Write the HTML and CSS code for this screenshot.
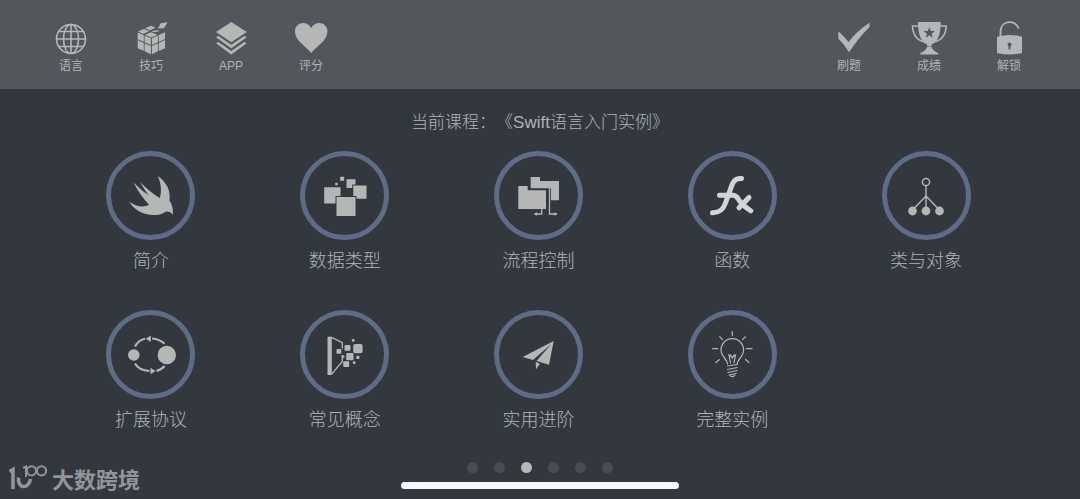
FILE: index.html
```html
<!DOCTYPE html>

<html lang="zh-CN">

<head>
	<title>Swift语言入门实例</title>
	<meta charset="utf-8" />
	<meta name="viewport" content="width=device-width,initial-scale=1" />
	<link rel="stylesheet" href="styles.css">
</head>

<body>
	<header class="toolbar">
		<nav class="toolbar-group">
			<button class="tool">
				<svg viewBox="0 0 36 36" fill="none" stroke="currentColor" stroke-width="1.6">
					<circle cx="18" cy="18" r="14.5" />
					<ellipse cx="18" cy="18" rx="7.5" ry="14.5" />
					<path d="M18 3.500V32.500M3.500 18H32.500M6 10.500H30M6 25.500H30" />
				</svg>
				<span>语言</span>
			</button>
			<button class="tool">
				<svg viewBox="0 0 36 36" fill="currentColor">
					<path d="M24.700 7.500L27.800 2.300L34.700 1.200L30.800 7.200Z" />
					<path d="M12 7.300L18 4.700L22.500 6.500L17.300 9.500ZM5 10.500L11 8L16.300 10L10.300 13ZM12 13.800L18 11.300L24.500 13.700L18.300 16.600ZM18.500 10.300L24.500 9L26.500 10.200L20.500 11.300Z" />
					<path d="M4.700 11.500L10.800 14.200V20.800L4.700 18.200ZM11.600 14.500L17.900 17.300V24L11.600 21.200ZM4.700 19.200L10.800 21.900V29.800L4.700 27.200ZM11.600 22.200L17.900 25V33.300L11.600 30.300Z" />
					<path d="M18.900 17.300L24.900 14.500V21.200L18.900 24ZM25.700 14L32 11.200V18L25.700 20.900ZM18.900 25L24.900 22.200V30.300L18.900 33.300ZM25.700 21.900L32 19V27.200L25.700 30Z" />
				</svg>
				<span>技巧</span>
			</button>
			<button class="tool">
				<svg viewBox="0 0 36 36" fill="currentColor">
					<path d="M18.300 1L33.800 11L18.300 21.300L3 11Z" />
					<path d="M3 16.200L5.300 15L18.300 23.800L31.300 15L33.800 16.200L18.300 27.200Z" />
					<path d="M3 22.300L5.300 21L18.300 29.900L31.300 21L33.800 22.300L18.300 33.400Z" />
				</svg>
				<span>APP</span>
			</button>
			<button class="tool">
				<svg viewBox="0 0 36 36" fill="currentColor">
					<path d="M18.200 32C14 26 2 20 2 10.500C2 1 14 -1 18.200 7C22.500 -1 34.400 1 34.400 10.500C34.400 20 22.500 26 18.200 32Z" />
				</svg>
				<span>评分</span>
			</button>
		</nav>
		<nav class="toolbar-group">
			<button class="tool">
				<svg viewBox="0 0 36 36" fill="currentColor">
					<path d="M7.300 10.200Q12.500 14.500 17.500 21Q26 10 38.500 1.800V6Q27.500 17 18 31.200Q13.500 23.500 7.300 17.500Z" />
				</svg>
				<span>刷题</span>
			</button>
			<button class="tool">
				<svg viewBox="0 0 36 36" fill="currentColor">
					<path d="M7 1H29.700Q29.700 20 20.500 23.500V25.500H16.200V23.500Q7 20 7 1Z" />
					<path d="M7.500 5H1.500Q2 18.500 14 21M29.200 5H35.200Q34.700 18.500 22.700 21" fill="none" stroke="currentColor" stroke-width="1.600" />
					<path d="M16 26H20.700Q22 30 27.300 32V33.400H9.300V32Q14.700 30 16 26Z" />
					<path class="cutout" d="M18.300 6L19.700 10L23.900 10.100L20.600 12.700L21.800 16.700L18.300 14.300L14.800 16.700L16 12.700L12.700 10.100L16.900 10Z" />
				</svg>
				<span>成绩</span>
			</button>
			<button class="tool">
				<svg viewBox="0 0 36 36" fill="currentColor">
					<path d="M9.500 15.500V11C9.500 -1.500 25 -1.500 27.600 7.500" fill="none" stroke="currentColor" stroke-width="1.800" />
					<path d="M6 15.700Q18.500 12.500 31 15.700V32Q18.500 35 6 32Z" />
					<path class="cutout" d="M18.500 21.500A2 2 0 0 1 19.500 25.200L19.300 28.500H17.700L17.500 25.200A2 2 0 0 1 18.500 21.500Z" />
				</svg>
				<span>解锁</span>
			</button>
		</nav>
	</header>

	<main>
		<h1>当前课程：《Swift语言入门实例》</h1>

		<div class="chapters">
			<a class="chapter" href="#">
				<span class="ring">
					<svg viewBox="0 0 48 48" fill="currentColor">
						<path d="M30.800 4C39 9.500 44 18.500 42.500 28.500C45 32.500 46.500 37 45.800 42.800C44 40.300 42 39.300 39 39.500C34.500 42.500 30.500 43.500 25.800 43C14.500 42.300 7 37.300 2.200 29.800C9 34.500 16 36 22 32.800C16 26.500 11 19 6.500 10.500C11.500 15.500 16.500 19.800 21.500 23.200C18.500 19 15.500 14.500 13.200 10.200C19.500 16.500 26 22 32.800 26C35 19.500 34 11 30.800 4Z" />
					</svg>
				</span>
				<span>简介</span>
			</a>
			<a class="chapter" href="#">
				<span class="ring">
					<svg viewBox="0 0 48 48" fill="currentColor">
						<path d="M14.200 10.700H16.700V13.200H14.200ZM19.200 4.700H23.200V8.700H19.200ZM25.500 7.200H34.500V12.400H31.300V16H25.500ZM32.300 13.400H45.500V26.700H35.500V24H32.300ZM3.200 15.200H19.500V24H14.500V31.400H3.200ZM15.500 25H34.500V44H15.500Z" />
					</svg>
				</span>
				<span>数据类型</span>
			</a>
			<a class="chapter" href="#">
				<span class="ring">
					<svg viewBox="0 0 48 48" fill="currentColor">
						<path d="M16.700 5H26V9H45V28.300H37V16.300H16.700ZM4.300 14H13.700V18.300H32V37H4.300Z" />
						<path d="M27.700 37V42H21M35.500 16V42H42.500" fill="none" stroke="currentColor" stroke-width="1.300" />
						<path d="M19.500 42L23 40.300V43.700ZM43.800 42L40.300 40.300V43.700Z" />
					</svg>
				</span>
				<span>流程控制</span>
			</a>
			<a class="chapter" href="#">
				<span class="ring">
					<svg class="bright" viewBox="0 0 48 48" fill="none" stroke="currentColor" stroke-width="5" stroke-linecap="round" stroke-linejoin="round">
						<path d="M33.500 6.500C27 6 25 9.500 22.500 17L17.500 31C15 38 11.500 41 4.500 40.800M11.500 23.300H25.500C29 23.500 30 27 32 29.500C35.500 33.500 38 36 42.800 38.800M41 25.500L31 35.800" />
					</svg>
				</span>
				<span>函数</span>
			</a>
			<a class="chapter" href="#">
				<span class="ring">
					<svg viewBox="0 0 48 48" fill="currentColor">
						<path d="M24 14V36M24 24L11 37.500M24 24L37 37.500" stroke="currentColor" stroke-width="1.400" />
						<circle cx="24" cy="10" r="3.600" fill="none" stroke="currentColor" stroke-width="1.500" />
						<circle cx="10.500" cy="39" r="4.400" />
						<circle cx="24" cy="39" r="4.400" />
						<circle cx="37.500" cy="39" r="4.400" />
					</svg>
				</span>
				<span>类与对象</span>
			</a>
			<a class="chapter" href="#">
				<span class="ring">
					<svg viewBox="0 0 48 48" fill="currentColor">
						<circle cx="6.800" cy="24" r="5.800" />
						<circle cx="39.800" cy="24" r="9.200" />
						<path d="M8 15.500Q11 9.500 18 7.800M25 7.500Q32.500 8 37.500 12.700M8 32.500Q12 39.500 22.500 40M29.500 39.800Q34.500 38.800 37.500 35" fill="none" stroke="currentColor" stroke-width="2.200" />
						<path d="M18.800 7.700L23.800 4.500V11ZM28.500 40L23.500 36.700V43.300Z" />
					</svg>
				</span>
				<span>扩展协议</span>
			</a>
			<a class="chapter" href="#">
				<span class="ring">
					<svg viewBox="0 0 48 48" fill="currentColor">
						<path d="M6.500 5.700H10.800V44H6.500Z" />
						<path d="M10.500 6.300L21.300 11.700V17.500M21.300 24V30.500L10.500 43.300" fill="none" stroke="currentColor" stroke-width="1.300" />
						<rect x="15.500" y="18" width="4.800" height="4.800" rx="1" />
						<rect x="23.500" y="14" width="6" height="5.800" rx="1" />
						<rect x="32.200" y="13" width="9.400" height="9.200" rx="2" />
						<rect x="25.200" y="22" width="7.300" height="7.300" rx="1" />
						<rect x="22.200" y="30.300" width="6" height="5.800" rx="1" />
						<rect x="30.800" y="8" width="2.800" height="2.800" rx="1" />
						<rect x="35.200" y="24.700" width="3.300" height="3.300" rx="1" />
						<rect x="31.800" y="30.300" width="2.700" height="2.700" rx="1" />
						<rect x="20.800" y="24.300" width="2.500" height="2.500" />
					</svg>
				</span>
				<span>常见概念</span>
			</a>
			<a class="chapter" href="#">
				<span class="ring">
					<svg viewBox="0 0 48 48" fill="currentColor">
						<path d="M39.700 10L8.700 26L19 28.900L37 13.300L22.500 29.900L35 33.700ZM21.700 31L26 32.700L22 38.200Z" />
					</svg>
				</span>
				<span>实用进阶</span>
			</a>
			<a class="chapter" href="#">
				<span class="ring">
					<svg viewBox="0 0 48 48" fill="none" stroke="currentColor" stroke-width="1.200" stroke-linecap="round">
						<path d="M19.500 33C19.500 28 13 26 13 19A11.300 11.300 0 0 1 35.600 19C35.600 26 29.200 28 29.200 33" />
						<path d="M24.300 0.500V4.500M11.700 5.700L14.500 8.700M37.500 5.700L34.500 8.700M4.500 17.700H9.700M38.500 17.700H44M7.800 31.500L11.300 28.700M41 31.500L37.500 28.500" />
						<path d="M22.500 32L21 24L24.300 26L27.500 24L26 32M22.500 24L24.300 27L26 24" />
						<path d="M19.500 35L29.200 33.500M19.500 38.500L29.200 36.500M20 41.500L29 39.500M21 44L28 42.500M22.500 45C24 46 26 45.500 27 44" />
					</svg>
				</span>
				<span>完整实例</span>
			</a>
		</div>
	</main>

	<footer>
		<div class="dots">
			<i></i>
			<i></i>
			<i class="active"></i>
			<i></i>
			<i></i>
			<i></i>
		</div>
		<div class="home-bar"></div>
	</footer>

	<div class="watermark">
		<svg viewBox="0 0 40 26" fill="none" stroke="currentColor">
			<path d="M0.500 6.500L4 4.500V24M9.500 12.500C8.500 24.500 20 24 21.500 14" stroke-width="3.600" />
			<path d="M14 3L17 1.500V12" stroke-width="2" />
			<circle cx="22.500" cy="5.800" r="4.600" stroke-width="2" />
			<circle cx="32.500" cy="5.800" r="4.600" stroke-width="2" />
		</svg>
		<span>大数跨境</span>
	</div>
</body>

</html>
```
FILE: styles.css
```css
:root {
	--background-color: #33383f;
	--toolbar-color: #53565b;
	--icon-color: #b5b7b7;
	--text-color: #b0b3b7;
	--ring-color: #5f6c85;
}

*,
*:before,
*:after {
	box-sizing: border-box;
	margin: 0;
	padding: 0;
}

body {
	min-height: 100vh;
	display: flex;
	flex-direction: column;
	background-color: var(--background-color);
	color: var(--text-color);
	font-family: "Liberation Sans", "Noto Sans CJK SC", sans-serif;
}

svg {
	display: block;
	overflow: visible;
	color: var(--icon-color);
}

.toolbar {
	display: flex;
	justify-content: space-between;
	padding: 21px 31px 14px;
	background-color: var(--toolbar-color);
}

.toolbar-group {
	display: flex;
}

.tool {
	width: 80px;
	display: flex;
	flex-direction: column;
	align-items: center;
	border: none;
	background: none;
	color: var(--text-color);
	font-family: "Liberation Sans", "Noto Sans CJK SC", sans-serif;
	font-size: 12px;
	line-height: 18px;
	cursor: pointer;
}

.tool svg {
	width: 36px;
	height: 36px;
}

.cutout {
	fill: var(--toolbar-color);
}

main {
	flex: 1;
}

h1 {
	padding: 21px 0 15px;
	font-size: 17px;
	font-weight: 300;
	line-height: 26px;
	text-align: center;
	text-spacing-trim: space-all;
}

.chapters {
	display: grid;
	grid-template-columns: repeat(5, 1fr);
	row-gap: 39px;
	padding: 0 57px 0 54px;
}

.chapter {
	display: flex;
	flex-direction: column;
	align-items: center;
	gap: 7px;
	color: var(--text-color);
	font-family: "Noto Sans CJK SC", sans-serif;
	font-size: 18px;
	font-weight: 300;
	line-height: 24px;
	text-decoration: none;
}

.ring {
	width: 89px;
	height: 89px;
	display: flex;
	align-items: center;
	justify-content: center;
	border: 5px solid var(--ring-color);
	border-radius: 50%;
}

.ring svg {
	width: 48px;
	height: 48px;
}

.ring .bright {
	color: #d3d4d4;
}

footer {
	display: flex;
	flex-direction: column;
	align-items: center;
	gap: 9px;
	padding-bottom: 10px;
}

.dots {
	display: flex;
	gap: 16px;
}

.dots i {
	width: 11px;
	height: 11px;
	border-radius: 50%;
	background-color: #484c55;
}

.dots .active {
	background-color: #b7b8b8;
}

.home-bar {
	width: 278px;
	height: 7px;
	border-radius: 4px;
	background-color: #f5f7fa;
}

/* sits over the bottom left corner */
.watermark {
	position: absolute;
	left: 9px;
	bottom: 7px;
	display: flex;
	align-items: center;
	gap: 3px;
	color: #92959b;
	font-family: "Noto Sans CJK SC", sans-serif;
	font-size: 22px;
	font-weight: 700;
	line-height: 28px;
}

.watermark svg {
	width: 40px;
	height: 26px;
	color: inherit;
}
```
